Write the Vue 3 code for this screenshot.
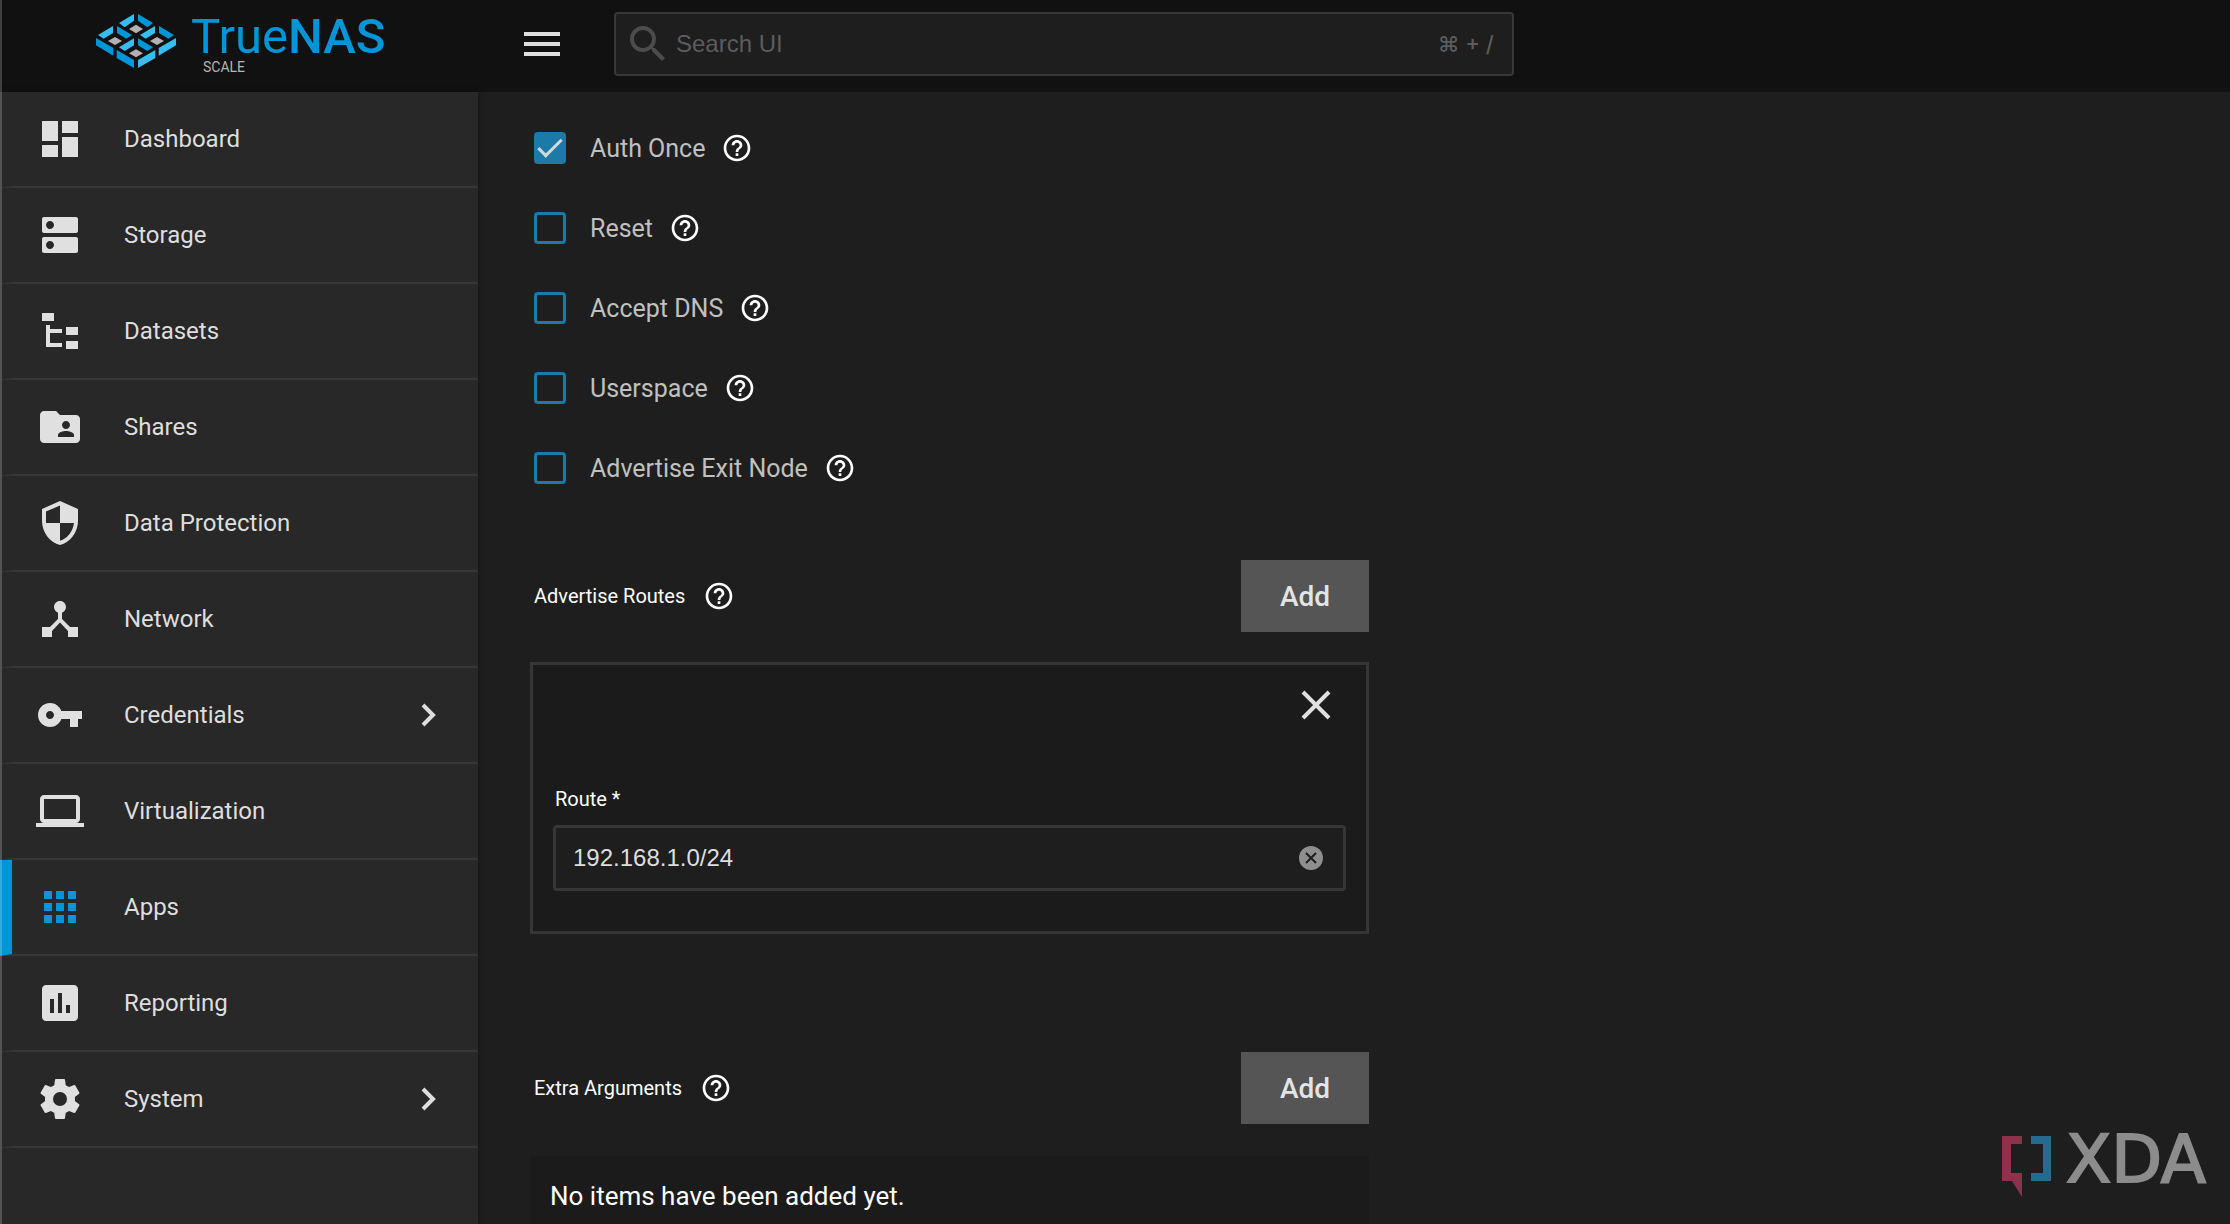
<script setup>
import { ref } from 'vue'

const navItems = [
  { label: 'Dashboard', icon: 'M3 13h8V3H3v10zm0 8h8v-6H3v6zm10 0h8V11h-8v10zm0-18v6h8V3h-8z' },
  {
    label: 'Storage',
    icon: 'M20 13H4c-.55 0-1 .45-1 1v6c0 .55.45 1 1 1h16c.55 0 1-.45 1-1v-6c0-.55-.45-1-1-1zM7 19c-1.1 0-2-.9-2-2s.9-2 2-2 2 .9 2 2-.9 2-2 2zM20 3H4c-.55 0-1 .45-1 1v6c0 .55.45 1 1 1h16c.55 0 1-.45 1-1V4c0-.55-.45-1-1-1zM7 9c-1.1 0-2-.9-2-2s.9-2 2-2 2 .9 2 2-.9 2-2 2z',
  },
  { label: 'Datasets', icon: 'M3 3h6v4H3V3zm12 7h6v4h-6v-4zm0 7h6v4h-6v-4zm-2-4H7v5h6v2H5V9h2v2h6v2z' },
  {
    label: 'Shares',
    icon: 'M20 6h-8l-2-2H4c-1.1 0-1.99.9-1.99 2L2 18c0 1.1.9 2 2 2h16c1.1 0 2-.9 2-2V8c0-1.1-.9-2-2-2zm-5 3c1.1 0 2 .9 2 2s-.9 2-2 2-2-.9-2-2 .9-2 2-2zm4 8h-8v-1c0-1.33 2.67-2 4-2s4 .67 4 2v1z',
  },
  {
    label: 'Data Protection',
    icon: 'M12 1 3 5v6c0 5.55 3.84 10.74 9 12 5.16-1.26 9-6.45 9-12V5l-9-4zm0 10.99h7c-.53 4.12-3.28 7.79-7 8.94V12H5V6.3l7-3.11v8.8z',
  },
  {
    label: 'Network',
    icon: 'm17 16-4-4V8.82C14.16 8.4 15 7.3 15 6c0-1.66-1.34-3-3-3S9 4.34 9 6c0 1.3.84 2.4 2 2.82V12l-4 4H3v5h5v-3.05l4-4.2 4 4.2V21h5v-5h-4z',
  },
  {
    label: 'Credentials',
    expandable: true,
    icon: 'M12.65 10C11.83 7.67 9.61 6 7 6c-3.31 0-6 2.69-6 6s2.69 6 6 6c2.61 0 4.83-1.67 5.65-4H17v4h4v-4h2v-4H12.65zM7 14c-1.1 0-2-.9-2-2s.9-2 2-2 2 .9 2 2-.9 2-2 2z',
  },
  {
    label: 'Virtualization',
    icon: 'M20 18c1.1 0 1.99-.9 1.99-2L22 6c0-1.1-.9-2-2-2H4c-1.1 0-2 .9-2 2v10c0 1.1.9 2 2 2H0v2h24v-2h-4zM4 6h16v10H4V6z',
  },
  {
    label: 'Apps',
    active: true,
    icon: 'M4 8h4V4H4v4zm6 12h4v-4h-4v4zm-6 0h4v-4H4v4zm0-6h4v-4H4v4zm6 0h4v-4h-4v4zm6-10v4h4V4h-4zm-6 4h4V4h-4v4zm6 6h4v-4h-4v4zm0 6h4v-4h-4v4z',
  },
  {
    label: 'Reporting',
    icon: 'M19 3H5c-1.1 0-2 .9-2 2v14c0 1.1.9 2 2 2h14c1.1 0 2-.9 2-2V5c0-1.1-.9-2-2-2zM9 17H7v-7h2v7zm4 0h-2V7h2v10zm4 0h-2v-4h2v4z',
  },
  {
    label: 'System',
    expandable: true,
    icon: 'M12 15.5A3.5 3.5 0 0 1 8.5 12 3.5 3.5 0 0 1 12 8.5a3.5 3.5 0 0 1 3.5 3.5 3.5 3.5 0 0 1-3.5 3.5m7.43-2.53c.04-.32.07-.64.07-.97s-.03-.66-.07-1l2.11-1.63c.19-.15.24-.42.12-.64l-2-3.46c-.12-.22-.39-.31-.61-.22l-2.49 1c-.52-.39-1.06-.73-1.69-.98l-.37-2.65A.506.506 0 0 0 14 2h-4c-.25 0-.46.18-.5.42l-.37 2.65c-.63.25-1.17.59-1.69.98l-2.49-1c-.22-.09-.49 0-.61.22l-2 3.46c-.13.22-.07.49.12.64L4.57 11c-.04.34-.07.67-.07 1s.03.65.07.97l-2.11 1.66c-.19.15-.25.42-.12.64l2 3.46c.12.22.39.3.61.22l2.49-1.01c.52.4 1.06.74 1.69.99l.37 2.65c.04.24.25.42.5.42h4c.25 0 .46-.18.5-.42l.37-2.65c.63-.26 1.17-.59 1.69-.99l2.49 1.01c.22.08.49 0 .61-.22l2-3.46c.12-.22.07-.49-.12-.64z',
  },
]

const helpPath =
  'M11 18h2v-2h-2v2zm1-16C6.48 2 2 6.48 2 12s4.48 10 10 10 10-4.48 10-10S17.52 2 12 2zm0 18c-4.41 0-8-3.59-8-8s3.59-8 8-8 8 3.59 8 8-3.59 8-8 8zm0-14c-2.21 0-4 1.79-4 4h2c0-1.1.9-2 2-2s2 .9 2 2c0 2-3 1.75-3 5h2c0-2.25 3-2.5 3-5 0-2.21-1.79-4-4-4z'

const options = ref([
  { id: 'auth-once', label: 'Auth Once', checked: true },
  { id: 'reset', label: 'Reset', checked: false },
  { id: 'accept-dns', label: 'Accept DNS', checked: false },
  { id: 'userspace', label: 'Userspace', checked: false },
  { id: 'exit-node', label: 'Advertise Exit Node', checked: false },
])

const route = ref('192.168.1.0/24')
const search = ref('')
</script>

<template>
  <div class="shell">
    <header class="topbar">
      <a class="brand" href="#" aria-label="TrueNAS Scale">
        <svg class="brand-mark" viewBox="0 0 240 162" aria-hidden="true">
          <g fill="#36bdf0">
            <path d="M69 27 114 0v20L86 40z" />
            <path d="M6 63 51 36v21L23 74z" />
            <path d="M132 63 177 36v21l-28 17z" />
            <path d="M69 100 114 73v21l-28 17z" />
            <path d="M240 72v22l-52 31v-23z" />
            <path d="M178 108v24l-52 30v-24z" />
          </g>
          <g fill="#0095d9">
            <path d="M171 27 126 0v20l28 20z" />
            <path d="M108 63 63 36v21l28 17z" />
            <path d="M234 63 189 36v21l28 17z" />
            <path d="M171 100 126 73v21l28 17z" />
            <path d="M0 72v22l52 31v-23z" />
            <path d="M62 108v24l52 30v-24z" />
          </g>
          <g fill="#b5b1b2">
            <path d="m99 45 21-13 21 13-21 13z" />
            <path d="m36 81 21-12 21 12-21 12z" />
            <path d="m162 81 21-12 21 12-21 12z" />
            <path d="m99 118 21-12 21 12-21 12z" />
          </g>
        </svg>
        <span class="brand-text">
          <span class="brand-name">True<b>NAS</b></span>
          <span class="brand-edition">SCALE</span>
        </span>
      </a>
      <button class="icon-button" type="button" aria-label="Toggle menu">
        <svg viewBox="0 0 24 24"><path d="M3 18h18v-2H3v2zm0-5h18v-2H3v2zm0-7v2h18V6H3z" /></svg>
      </button>
      <label class="search">
        <svg viewBox="0 0 24 24" aria-hidden="true">
          <path
            d="M15.5 14h-.79l-.28-.27C15.41 12.59 16 11.11 16 9.5 16 5.91 13.09 3 9.5 3S3 5.91 3 9.5 5.91 16 9.5 16c1.61 0 3.09-.59 4.23-1.57l.27.28v.79l5 4.99L20.49 19l-4.99-5zm-6 0C7.01 14 5 11.99 5 9.5S7.01 5 9.5 5 14 7.01 14 9.5 11.99 14 9.5 14z"
          />
        </svg>
        <input v-model="search" type="text" placeholder="Search UI" aria-label="Search UI" />
        <span class="shortcut">⌘ + /</span>
      </label>
    </header>

    <div class="body">
      <nav class="sidebar">
        <a
          v-for="item in navItems"
          :key="item.label"
          href="#"
          class="nav-item"
          :class="{ active: item.active }"
        >
          <svg class="nav-icon" viewBox="0 0 24 24" aria-hidden="true"><path :d="item.icon" /></svg>
          <span class="nav-label">{{ item.label }}</span>
          <svg v-if="item.expandable" class="chevron" viewBox="0 0 16 24" aria-hidden="true">
            <path d="m3 2 10 10L3 22" />
          </svg>
        </a>
      </nav>

      <main class="content">
        <form class="form" @submit.prevent>
          <div v-for="option in options" :key="option.id" class="option">
            <input :id="option.id" v-model="option.checked" type="checkbox" />
            <label :for="option.id">{{ option.label }}</label>
            <svg class="help" viewBox="0 0 24 24" aria-hidden="true"><path :d="helpPath" /></svg>
          </div>

          <section class="list">
            <div class="list-head">
              <span class="caption">Advertise Routes</span>
              <svg class="help" viewBox="0 0 24 24" aria-hidden="true"><path :d="helpPath" /></svg>
              <button class="add" type="button">Add</button>
            </div>
            <div class="panel">
              <button class="remove" type="button" aria-label="Remove route">
                <svg viewBox="0 0 32 32"><path d="m3 3 26 26M29 3 3 29" /></svg>
              </button>
              <label class="caption" for="route">Route *</label>
              <div class="field">
                <input id="route" v-model="route" type="text" />
                <button type="button" aria-label="Clear" @click="route = ''">
                  <svg viewBox="0 0 24 24">
                    <circle cx="12" cy="12" r="12" />
                    <path d="m7 7 10 10M17 7 7 17" />
                  </svg>
                </button>
              </div>
            </div>
          </section>

          <section class="list">
            <div class="list-head">
              <span class="caption">Extra Arguments</span>
              <svg class="help" viewBox="0 0 24 24" aria-hidden="true"><path :d="helpPath" /></svg>
              <button class="add" type="button">Add</button>
            </div>
            <p class="empty">No items have been added yet.</p>
          </section>
        </form>
      </main>
    </div>

    <div class="watermark" aria-label="XDA">
      <svg viewBox="0 0 50 62" aria-hidden="true">
        <path fill="#8e314c" d="M0 0h20v8H9v29h11v24L10 45H0z" />
        <path fill="#256b8f" d="M29 0h20v45H29v-8h12V8H29z" />
      </svg>
      <span>XDA</span>
    </div>
  </div>
</template>

<style>
body {
  background: #1e1e1e;
}
</style>

<style scoped>
.shell {
  position: relative;
  display: flex;
  flex-direction: column;
  height: 100vh;
  overflow: hidden;
  background: #1e1e1e;
  color: #fff;
  font-family: Roboto, sans-serif;
}

.shell::before {
  content: '';
  position: absolute;
  inset: 0 auto 0 0;
  z-index: 1;
  width: 2px;
  background: rgba(255, 255, 255, 0.2);
}

button {
  padding: 0;
  border: 0;
  background: none;
  color: inherit;
  font: inherit;
}

input {
  margin: 0;
}

a {
  color: inherit;
  text-decoration: none;
}

svg {
  display: block;
  flex: none;
}

.topbar {
  display: flex;
  flex: none;
  align-items: center;
  height: 92px;
  padding-bottom: 4px;
  box-sizing: border-box;
  background: #111;
}

.brand {
  display: flex;
  flex: none;
  align-items: flex-start;
  gap: 15px;
  width: 478px;
  height: 60px;
  padding-left: 96px;
  box-sizing: border-box;
}

.brand-mark {
  width: 80px;
  height: 54px;
}

.brand-text {
  display: flex;
  flex-direction: column;
}

.brand-name {
  color: #0095d9;
  font-size: 49px;
  line-height: 46px;
}

.brand-name b {
  font-weight: 500;
}

.brand-edition {
  padding-left: 12px;
  color: #b5b5b5;
  font-size: 14px;
  line-height: 14px;
}

.icon-button {
  margin-left: 40px;
}

.icon-button svg {
  width: 48px;
  height: 48px;
  fill: #dedede;
}

.search {
  display: flex;
  align-items: center;
  width: 900px;
  height: 64px;
  margin-left: 48px;
  padding: 0 18px 0 8px;
  box-sizing: border-box;
  border: 2px solid #383838;
  border-radius: 4px;
  background: #1e1e1e;
  color: #5c5c5c;
}

.search svg {
  width: 48px;
  height: 48px;
  fill: #4c4c4c;
}

.search input {
  flex: 1;
  min-width: 0;
  padding: 0 4px;
  border: 0;
  background: none;
  color: #dedede;
  font: 24px/32px 'Liberation Sans', sans-serif;
}

.search input::placeholder {
  color: #5c5c5c;
  opacity: 1;
}

.shortcut {
  font: 500 22px/32px Inter, 'DejaVu Sans', sans-serif;
}

.body {
  display: flex;
  flex: 1;
  min-height: 0;
}

.sidebar {
  flex: none;
  width: 478px;
  background: #282828;
  box-shadow: 0 0 6px rgba(0, 0, 0, 0.4);
}

.nav-item {
  display: flex;
  align-items: center;
  height: 96px;
  padding: 0 42px 0 24px;
  box-sizing: border-box;
  border-bottom: 2px solid #373737;
  border-left: 12px solid transparent;
  color: #dedede;
  font-size: 24px;
}

.nav-item.active {
  border-left-color: #0095d9;
}

.nav-icon {
  width: 48px;
  height: 48px;
  fill: #e0e0e0;
}

.active .nav-icon {
  fill: #0095d9;
}

.nav-label {
  flex: 1;
  padding-left: 40px;
}

.chevron {
  width: 16px;
  height: 24px;
  fill: none;
  stroke: #dedede;
  stroke-width: 4;
}

.content {
  flex: 1;
  min-width: 0;
  padding: 16px 52px;
  overflow-y: auto;
  scrollbar-width: none;
}

.form {
  max-width: 839px;
}

.help {
  width: 32px;
  height: 32px;
  margin-left: 16px;
  fill: #fff;
}

.option {
  display: flex;
  align-items: center;
  height: 80px;
  padding-left: 4px;
  color: #c0c0c0;
  font-size: 25px;
}

.option input {
  position: relative;
  width: 32px;
  height: 32px;
  box-sizing: border-box;
  border: 3px solid #1c7aa8;
  border-radius: 4px;
  appearance: none;
}

.option input:checked {
  background: #1c7aa8;
}

.option input:checked::before {
  content: '';
  position: absolute;
  top: 4px;
  left: 1px;
  width: 24px;
  height: 12px;
  box-sizing: border-box;
  border: solid #d0d8dc;
  border-width: 0 0 3px 3px;
  transform: rotate(-45deg);
}

.option label {
  padding-left: 24px;
}

.list {
  margin-bottom: 118px;
}

.option + .list {
  margin-top: 52px;
}

.list-head {
  display: flex;
  align-items: center;
  height: 72px;
  padding-left: 4px;
}

.caption {
  font-size: 20px;
  line-height: 24px;
}

.list-head .help {
  margin-left: 18px;
}

.add {
  width: 128px;
  height: 72px;
  margin-left: auto;
  background: #555;
  color: #e4e4e4;
  font-size: 28px;
  font-weight: 500;
}

.panel {
  display: flex;
  flex-direction: column;
  margin-top: 30px;
  padding: 24px 20px 40px;
  border: 3px solid #363636;
  background: #1b1b1b;
}

.remove {
  align-self: flex-end;
  margin: 0 14px 66px 0;
}

.remove svg {
  width: 32px;
  height: 32px;
  fill: none;
  stroke: #e0e0e0;
  stroke-width: 4;
}

.panel .caption {
  padding-left: 2px;
}

.field {
  display: flex;
  align-items: center;
  height: 66px;
  margin-top: 14px;
  padding: 0 20px 0 17px;
  box-sizing: border-box;
  border: 3px solid #363636;
  border-radius: 4px;
  background: #1e1e1e;
}

.field input {
  flex: 1;
  min-width: 0;
  padding: 0;
  border: 0;
  background: none;
  color: #dedede;
  font: 24px/32px 'Liberation Sans', sans-serif;
}

.field svg {
  width: 24px;
  height: 24px;
  fill: #8e8e8e;
  stroke: #1e1e1e;
  stroke-width: 2;
}

.field circle {
  stroke: none;
}

.empty {
  margin: 32px 0 0;
  padding: 20px;
  background: #1b1b1b;
  font-size: 26px;
  line-height: 40px;
}

.watermark {
  position: absolute;
  right: 24px;
  bottom: 26px;
  display: flex;
  gap: 14px;
  color: #8c8c8c;
}

.watermark svg {
  width: 50px;
  height: 62px;
}

.watermark span {
  font: 66px/48px 'DejaVu Sans', sans-serif;
  -webkit-text-stroke: 2px;
}
</style>
